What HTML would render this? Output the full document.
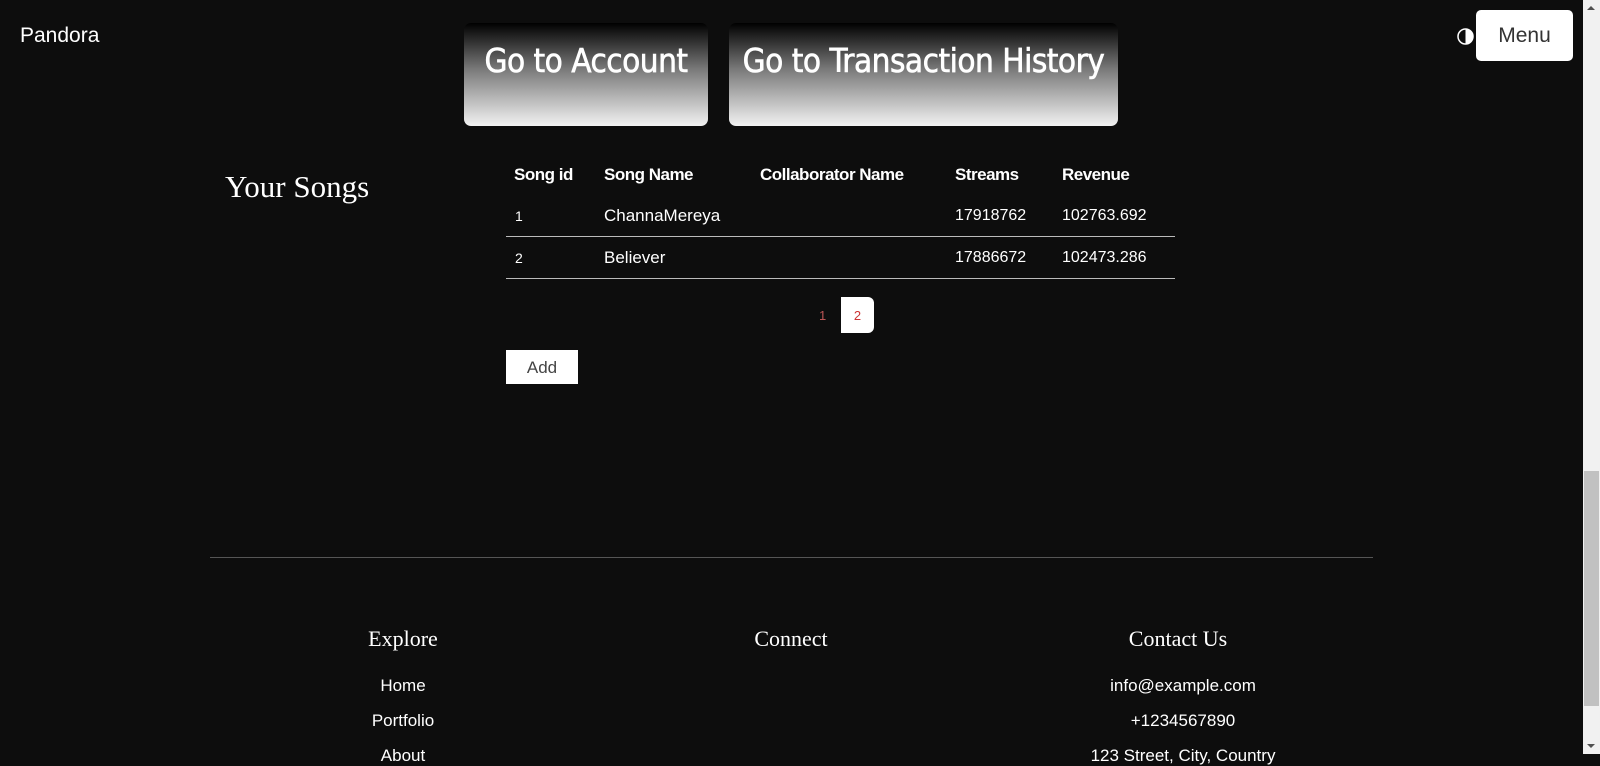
<!DOCTYPE html>
<html><head><style>
*{margin:0;padding:0;box-sizing:border-box}
html,body{width:1600px;height:754px;overflow:hidden;background:#0d0d0d;color:#fff;font-family:"Liberation Sans",sans-serif}
.a{position:absolute;white-space:nowrap}
.btn{position:absolute;top:23px;height:103px;border-radius:7px;background:linear-gradient(#000 0%,#7a7a7a 45%,#f2f2f2 100%);font-family:"DejaVu Sans Condensed","Liberation Sans",sans-serif;font-size:33px;white-space:nowrap;color:#fff;text-align:center;padding-top:18px;letter-spacing:-0.5px;-webkit-text-stroke:0.6px #fff}
.serif{font-family:"Liberation Serif",serif}
.th{font-weight:bold;font-size:17px;letter-spacing:-0.5px}
.td{font-size:17px}
.fc{position:absolute;transform:translateX(-50%);white-space:nowrap;font-size:17px}
</style></head><body>
<div class="a" style="left:20px;top:24px;font-size:21px">Pandora</div>
<div class="btn" style="left:464px;width:244px">Go to Account</div>
<div class="btn" style="left:729px;width:389px">Go to Transaction History</div>
<svg class="a" style="left:1457px;top:28px" width="17" height="17" viewBox="0 0 17 17"><circle cx="8.5" cy="8.5" r="7.5" fill="none" stroke="#fff" stroke-width="1.5"/><path d="M8.5 1A7.5 7.5 0 0 1 8.5 16Z" fill="#fff"/></svg>
<div class="a" style="left:1476px;top:10px;width:97px;height:51px;background:#fff;border-radius:5px;color:#333;font-size:21px;text-align:center;line-height:51px">Menu</div>
<div class="a serif" style="left:225px;top:169px;font-size:31px">Your Songs</div>
<div class="a th" style="left:514px;top:165px">Song id</div>
<div class="a th" style="left:604px;top:165px">Song Name</div>
<div class="a th" style="left:760px;top:165px">Collaborator Name</div>
<div class="a th" style="left:955px;top:165px">Streams</div>
<div class="a th" style="left:1062px;top:165px">Revenue</div>
<div class="a td" style="left:515px;top:208px;font-size:14px">1</div>
<div class="a td" style="left:604px;top:206px">ChannaMereya</div>
<div class="a td" style="left:955px;top:207px;font-size:16px">17918762</div>
<div class="a td" style="left:1062px;top:207px;font-size:16px">102763.692</div>
<div class="a" style="left:506px;top:236px;width:669px;height:1px;background:#bbb"></div>
<div class="a td" style="left:515px;top:250px;font-size:14px">2</div>
<div class="a td" style="left:604px;top:248px">Believer</div>
<div class="a td" style="left:955px;top:249px;font-size:16px">17886672</div>
<div class="a td" style="left:1062px;top:249px;font-size:16px">102473.286</div>
<div class="a" style="left:506px;top:278px;width:669px;height:1px;background:#bbb"></div>
<div class="a" style="left:819px;top:308px;font-size:13px;color:#b55">1</div>
<div class="a" style="left:841px;top:297px;width:33px;height:36px;background:#fff;border-radius:0 6px 6px 0;color:#c33;font-size:13px;text-align:center;line-height:38px">2</div>
<div class="a" style="left:506px;top:350px;width:72px;height:34px;background:#fff;color:#444;font-size:17px;text-align:center;line-height:36px">Add</div>
<div class="a" style="left:210px;top:557px;width:1163px;height:1px;background:#555"></div>
<div class="fc serif" style="left:403px;top:626px;font-size:22px">Explore</div>
<div class="fc serif" style="left:791px;top:626px;font-size:22px">Connect</div>
<div class="fc serif" style="left:1178px;top:626px;font-size:22px">Contact Us</div>
<div class="fc" style="left:403px;top:676px">Home</div>
<div class="fc" style="left:403px;top:711px">Portfolio</div>
<div class="fc" style="left:403px;top:746px">About</div>
<div class="fc" style="left:1183px;top:676px">info@example.com</div>
<div class="fc" style="left:1183px;top:711px">+1234567890</div>
<div class="fc" style="left:1183px;top:746px">123 Street, City, Country</div>
<div class="a" style="left:1583px;top:0;width:17px;height:754px;background:#f1f1f1"></div>
<div class="a" style="left:1584px;top:471px;width:15px;height:235px;background:#c1c1c1"></div>
<div class="a" style="left:1587px;top:6px;width:0;height:0;border-left:4px solid transparent;border-right:4px solid transparent;border-bottom:4px solid #505050"></div>
<div class="a" style="left:1587px;top:744px;width:0;height:0;border-left:4px solid transparent;border-right:4px solid transparent;border-top:4px solid #505050"></div>
</body></html>
